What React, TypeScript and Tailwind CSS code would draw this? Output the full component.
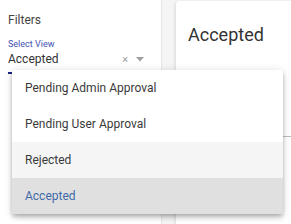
import React from 'react';

const OPTIONS = ['Pending Admin Approval', 'Pending User Approval', 'Rejected', 'Accepted'];

export default function App() {
  const selected = 'Accepted';
  const hovered = 'Rejected';

  return (
    <div className="relative w-[291px] h-[224px] overflow-hidden bg-[#f5f5f5] font-['Roboto',sans-serif] text-[#333]">
      <div className="flex h-full">
        {/* Filters sidebar */}
        <div className="w-[162px] h-full bg-white border-r border-[#e6e6e6] px-2 pt-[12px]">
          <div className="text-[12px] leading-[16px] text-[#444]">Filters</div>
          <div className="mt-[10px] text-[9px] leading-[12px] text-[#3f51b5]">Select View</div>
          <div className="relative flex items-center h-[24px] pb-[4px] pr-[9px] border-b-2 border-[#1a237e]">
            <span className="flex-1 text-[12px] leading-[16px] text-[#333]">Accepted</span>
            <span className="text-[11px] leading-none text-[#9e9e9e] mr-[8px]">×</span>
            <svg width="8" height="5" viewBox="0 0 8 5" className="text-[#9e9e9e]">
              <path d="M0 0 L8 0 L4 4.5 Z" fill="currentColor" />
            </svg>
          </div>
        </div>

        {/* Detail card */}
        <div className="ml-[13px] mt-[1px] flex-1 bg-white rounded-tl-[4px] shadow-[0_1px_3px_rgba(0,0,0,0.15)] border-l border-[#e6e6e6]">
          <div className="pl-[12px] pt-[22px] text-[18px] leading-[24px] text-[#333]">Accepted</div>
          <div className="mt-[89px] border-b border-[#bdbdbd]" />
        </div>
      </div>

      {/* Dropdown menu */}
      <ul className="absolute left-[12px] top-[70px] w-[271px] bg-white rounded-[2px] shadow-[0_2px_4px_-1px_rgba(0,0,0,0.2),0_4px_5px_0_rgba(0,0,0,0.14),0_1px_10px_0_rgba(0,0,0,0.12)]">
        {OPTIONS.map(o => (
          <li
            key={o}
            className={`h-[36px] flex items-center pl-[13px] text-[12px] ${
              o === selected
                ? 'bg-[#e0e0e0] text-[#3f6aa8]'
                : o === hovered
                ? 'bg-[#f5f5f5] text-[#3a3a3a]'
                : 'text-[#3a3a3a]'
            }`}
          >
            {o}
          </li>
        ))}
      </ul>
    </div>
  );
}
